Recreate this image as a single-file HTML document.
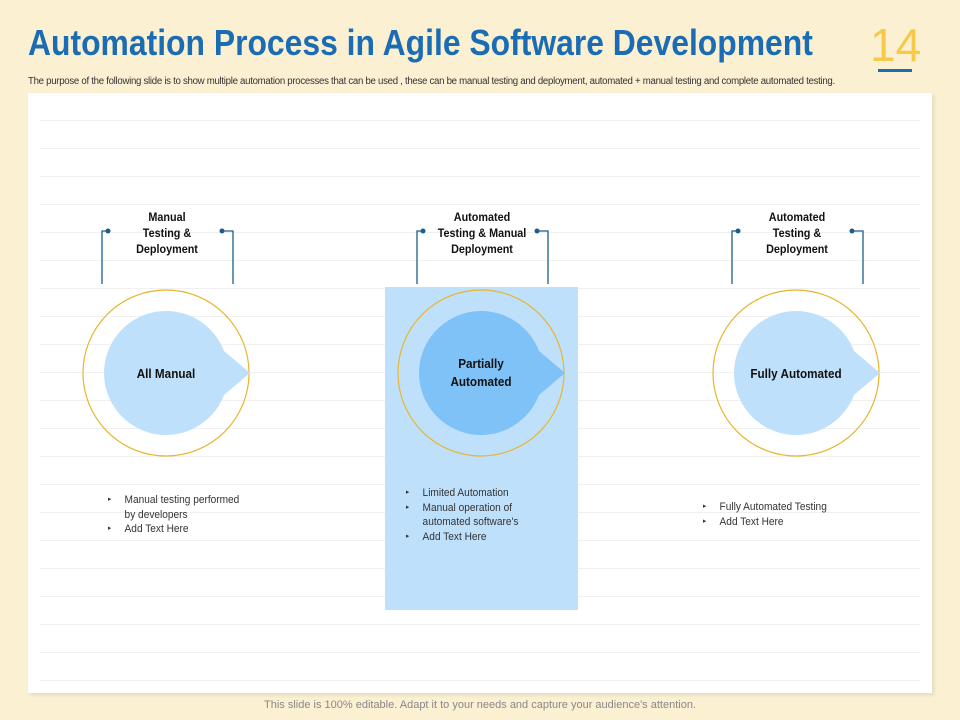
<!DOCTYPE html>
<html><head><style>
body{margin:0;width:960px;height:720px;background:#fcf0d2;position:relative;overflow:hidden;font-family:"Liberation Sans",sans-serif}
.abs{position:absolute}
.title{left:28px;top:22px;font-size:36px;font-weight:bold;color:#1a6db5;white-space:nowrap;transform:scaleX(0.885);transform-origin:left top}
.num{left:870px;top:18px;font-size:46px;color:#f7c948;font-weight:normal}
.sub{left:28px;top:76px;font-size:10px;color:#333;white-space:nowrap;transform:scaleX(0.965);transform-origin:left top;letter-spacing:-0.3px}
.panel{left:28px;top:93px;width:904px;height:600px;background:#fff;box-shadow:2px 2px 4px rgba(0,0,0,.1)}
.lbl{font-size:12px;font-weight:bold;color:#111;text-align:center;line-height:16px;width:140px;transform:scaleX(0.9)}
.bl{font-size:11px;color:#333;line-height:14.5px;transform:scaleX(0.92);transform-origin:left top}
.bl div{padding-left:18px;position:relative}
.bl div.b:before{content:"▸";position:absolute;left:0;font-size:7px}
</style></head><body>
<div class="abs title">Automation Process in Agile Software Development</div>
<div class="abs num">14</div>
<div class="abs" style="left:878px;top:69px;width:34px;height:3px;background:#1a6db5"></div>
<div class="abs sub">The purpose of the following slide is to show multiple automation processes that can be used , these can be manual testing and deployment, automated + manual testing and complete automated testing.</div>
<div class="abs panel"></div>
<svg class="abs" style="left:0;top:0" width="960" height="720">
<g stroke="#f0f0f0" stroke-width="1">
<line x1="40" x2="920" y1="120.5" y2="120.5"/><line x1="40" x2="920" y1="148.5" y2="148.5"/><line x1="40" x2="920" y1="176.5" y2="176.5"/><line x1="40" x2="920" y1="204.5" y2="204.5"/><line x1="40" x2="920" y1="232.5" y2="232.5"/><line x1="40" x2="920" y1="260.5" y2="260.5"/><line x1="40" x2="920" y1="288.5" y2="288.5"/><line x1="40" x2="920" y1="316.5" y2="316.5"/><line x1="40" x2="920" y1="344.5" y2="344.5"/><line x1="40" x2="920" y1="372.5" y2="372.5"/><line x1="40" x2="920" y1="400.5" y2="400.5"/><line x1="40" x2="920" y1="428.5" y2="428.5"/><line x1="40" x2="920" y1="456.5" y2="456.5"/><line x1="40" x2="920" y1="484.5" y2="484.5"/><line x1="40" x2="920" y1="512.5" y2="512.5"/><line x1="40" x2="920" y1="540.5" y2="540.5"/><line x1="40" x2="920" y1="568.5" y2="568.5"/><line x1="40" x2="920" y1="596.5" y2="596.5"/><line x1="40" x2="920" y1="624.5" y2="624.5"/><line x1="40" x2="920" y1="652.5" y2="652.5"/><line x1="40" x2="920" y1="680.5" y2="680.5"/>
</g>
<rect x="385" y="287" width="193" height="323" fill="#bfe0fb"/>
<g>
<path d="M102 284V231H108M233 284V231H222" fill="none" stroke="#1b5e8c" stroke-width="1.3"/>
<circle cx="108" cy="231" r="2.5" fill="#1b5e8c"/><circle cx="222" cy="231" r="2.5" fill="#1b5e8c"/>
<circle cx="166" cy="373" r="83" fill="none" stroke="#e6b62e" stroke-width="1.2"/>
<path d="M166 311A62 62 0 0 1 224 351L250 373L224 395A62 62 0 1 1 166 311Z" fill="#bfe0fb"/>
</g>
<g transform="translate(315,0)">
<path d="M102 284V231H108M233 284V231H222" fill="none" stroke="#1b5e8c" stroke-width="1.3"/>
<circle cx="108" cy="231" r="2.5" fill="#1b5e8c"/><circle cx="222" cy="231" r="2.5" fill="#1b5e8c"/>
<circle cx="166" cy="373" r="83" fill="none" stroke="#e6b62e" stroke-width="1.2"/>
<path d="M166 311A62 62 0 0 1 224 351L250 373L224 395A62 62 0 1 1 166 311Z" fill="#7fc2f8"/>
</g>
<g transform="translate(630,0)">
<path d="M102 284V231H108M233 284V231H222" fill="none" stroke="#1b5e8c" stroke-width="1.3"/>
<circle cx="108" cy="231" r="2.5" fill="#1b5e8c"/><circle cx="222" cy="231" r="2.5" fill="#1b5e8c"/>
<circle cx="166" cy="373" r="83" fill="none" stroke="#e6b62e" stroke-width="1.2"/>
<path d="M166 311A62 62 0 0 1 224 351L250 373L224 395A62 62 0 1 1 166 311Z" fill="#bfe0fb"/>
</g>
</svg>
<div class="abs lbl" style="left:97px;top:209px">Manual<br>Testing &amp;<br>Deployment</div>
<div class="abs lbl" style="left:412px;top:209px">Automated<br>Testing &amp; Manual<br>Deployment</div>
<div class="abs lbl" style="left:727px;top:209px">Automated<br>Testing &amp;<br>Deployment</div>
<div class="abs lbl" style="left:96px;top:366px;font-size:13px">All Manual</div>
<div class="abs lbl" style="left:411px;top:355px;font-size:13px;line-height:18px">Partially<br>Automated</div>
<div class="abs lbl" style="left:726px;top:366px;font-size:13px">Fully Automated</div>
<div class="abs bl" style="left:108px;top:493px"><div class="b">Manual testing performed</div><div>by developers</div><div class="b">Add Text Here</div></div>
<div class="abs bl" style="left:406px;top:486px"><div class="b">Limited Automation</div><div class="b">Manual operation of</div><div>automated software's</div><div class="b">Add Text Here</div></div>
<div class="abs bl" style="left:703px;top:500px"><div class="b">Fully Automated Testing</div><div class="b">Add Text Here</div></div>
<div class="abs" style="left:0;top:699px;width:960px;text-align:center;font-size:11px;color:#888">This slide is 100% editable. Adapt it to your needs and capture your audience's attention.</div>
</body></html>
